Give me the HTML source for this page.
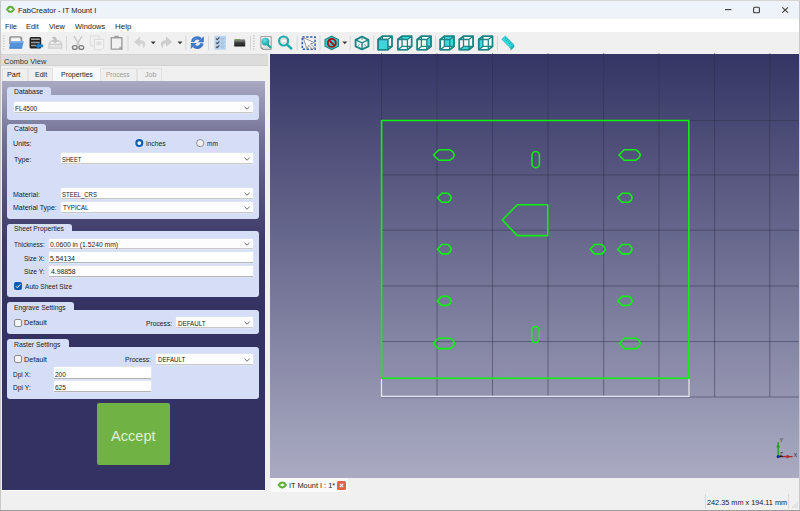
<!DOCTYPE html><html><head><meta charset="utf-8"><style>
*{box-sizing:border-box;margin:0;padding:0}
html,body{width:800px;height:511px;overflow:hidden;background:#f0f0f0;font-family:"Liberation Sans",sans-serif;color:#1a1a1a}
div,svg{position:absolute}
.t{white-space:nowrap}
.g{background:#d5def6;border-radius:3px}
.cb{background:#fdfdfd;border-bottom:1px solid #c8c8c8;border-radius:1px;box-shadow:0 0 0 0.5px #e4e8f4}
.fld{background:#fff;border-bottom:1px solid #b4b4b4;box-shadow:0 0 0 0.5px #e6eaf4}
.chk{width:8px;height:8px;border:1px solid #8a8a8a;border-radius:2px;background:#f5f5f5}
</style></head><body>
<div style="left:0;top:0;width:800px;height:1px;background:#d6d6d6"></div>
<div style="left:0;top:1px;width:800px;height:18px;background:#eef2f9;border-radius:6px 6px 0 0"></div>
<svg style="left:0;top:0" width="20" height="18" viewBox="0 0 20 18"><path d="M5.8 9.4L8.3 6.3Q10.5 5 12.7 6.3L15.2 9.4L12.7 12.2Q10.5 13.4 8.3 12.2Z M8.1 9.4L10.5 7.8L12.9 9.4L10.5 11Z" fill="#62b03a" fill-rule="evenodd"/></svg>
<div class="t" style="left:18.22px;top:5.92px;font-size:7.8px;line-height:9.36px;transform:scaleX(0.9620);transform-origin:0 0;color:#202020">FabCreator - IT Mount I</div>
<svg style="left:690px;top:2px" width="110" height="16" viewBox="0 0 110 16"><path d="M35 7.6H41.3" stroke="#3a3a3a" stroke-width="1.1"/><rect x="63.6" y="5.3" width="5.8" height="5.4" rx="1" fill="none" stroke="#3a3a3a" stroke-width="1.1"/><path d="M92.3 5.3L98 10.7M98 5.3L92.3 10.7" stroke="#3a3a3a" stroke-width="1.1"/></svg>
<div style="left:0;top:19px;width:800px;height:13px;background:#fff"></div>
<div class="t" style="left:5.32px;top:22.02px;font-size:7.8px;line-height:9.36px;transform:scaleX(0.9532);transform-origin:0 0">File</div>
<div class="t" style="left:26.13px;top:22.02px;font-size:7.8px;line-height:9.36px;transform:scaleX(0.9462);transform-origin:0 0">Edit</div>
<div class="t" style="left:49.00px;top:22.02px;font-size:7.8px;line-height:9.36px;transform:scaleX(0.9433);transform-origin:0 0">View</div>
<div class="t" style="left:74.90px;top:22.02px;font-size:7.8px;line-height:9.36px;transform:scaleX(0.9556);transform-origin:0 0">Windows</div>
<div class="t" style="left:114.99px;top:22.02px;font-size:7.8px;line-height:9.36px;transform:scaleX(1.0164);transform-origin:0 0">Help</div>
<svg style="left:0;top:32px" width="800" height="21" viewBox="0 32 800 21"><rect x="3.3" y="35.5" width="1" height="1" fill="#a8a8a8"/><rect x="3.3" y="38.1" width="1" height="1" fill="#a8a8a8"/><rect x="3.3" y="40.7" width="1" height="1" fill="#a8a8a8"/><rect x="3.3" y="43.3" width="1" height="1" fill="#a8a8a8"/><rect x="3.3" y="45.9" width="1" height="1" fill="#a8a8a8"/><rect x="3.3" y="48.5" width="1" height="1" fill="#a8a8a8"/><path d="M9.2 37.2L10.5 36.2H20.5L22.2 37.5V44H9.2Z" fill="#8e8e8e"/><path d="M10.8 37.6H20.4L20.9 43.5H10.5Z" fill="#dadada"/><path d="M11.5 38.3H19.8L20.2 42.5H11.2Z" fill="#f6f6f6"/><path d="M10.3 41.2H23.7L22 48.6H9.2Z" fill="#5593dc"/><path d="M10.3 41.2H23.7L23.4 42.4H10.1Z" fill="#86b6ec"/><path d="M9.4 47.7H22.2L22 48.6H9.2Z" fill="#3c72b8"/><rect x="29.6" y="37" width="11.6" height="11.5" rx="1.5" fill="#222"/><path d="M31 39.2H39.8M31 42.4H39.8M31 45.6H36" stroke="#9a9a9a" stroke-width="1.5"/><path d="M35.6 45.9L39.2 42.6V44.6H43.2V47.2H39.2V49.2Z" fill="#1a80d2"/><path d="M48.3 43.5L50.5 40.5H53V42H51.3L50 43.8H60.6L59.3 42H57.6V40.5H60.1L62.3 43.5V48.8H48.3Z" fill="#cdcdcd"/><path d="M49.6 45H61V47.6H49.6Z" fill="#e4e4e4"/><path d="M51.5 37.8C53.5 36 56 36.3 56.8 38.6V40.2H59L55.2 43.6L51.5 40.2H53.6V39.4C53.3 38.5 52.5 38.3 51.5 37.8Z" fill="#c2c2c2"/><path d="M66.5 35.8V50.2" stroke="#d6d6d6" stroke-width="1"/><path d="M74 36L79.5 45.5M82 36L76.5 45.5" stroke="#c4c4c4" stroke-width="1.3"/><ellipse cx="74.8" cy="47.5" rx="2.4" ry="1.9" fill="none" stroke="#7c7c7c" stroke-width="1.3"/><ellipse cx="81.3" cy="47.5" rx="2.4" ry="1.9" fill="none" stroke="#7c7c7c" stroke-width="1.3"/><rect x="90.6" y="35.8" width="8.4" height="10" fill="none" stroke="#dedede" stroke-width="1"/><path d="M94.5 39.3H103.7V47.5L101.5 49.7H94.5Z" fill="#f4f4f4" stroke="#d8d8d8" stroke-width="1"/><rect x="96.3" y="41.5" width="5.2" height="4" fill="#e0e0e0"/><rect x="110.6" y="37" width="12" height="12.8" fill="#9e9e9e"/><path d="M112 38.6H121.2V46.5L119 48.4H112Z" fill="#f1f1f1"/><rect x="114.3" y="35.7" width="4.6" height="2.2" rx="0.8" fill="#9e9e9e"/><path d="M119 48.4L121.2 46.5H119Z" fill="#c8c8c8"/><path d="M128.0 35.8V50.2" stroke="#d6d6d6" stroke-width="1"/><path d="M140.2 36.3L134 42L140.2 46.8V43.8C142.8 43.6 144 45.5 142.8 48.6C146.6 45.6 146.4 40.2 140.2 40.2Z" fill="#d2d2d2"/><path d="M150.7 41.6H155.7L153.2 44.3Z" fill="#3a3a3a"/><path d="M166 36.3L172.2 42L166 46.8V43.8C163.4 43.6 162.2 45.5 163.4 48.6C159.6 45.6 159.8 40.2 166 40.2Z" fill="#cdcdcd"/><path d="M177.5 41.6H182.5L180.0 44.3Z" fill="#3a3a3a"/><path d="M185.8 35.8V50.2" stroke="#d6d6d6" stroke-width="1"/><path d="M192.6 41.9A4.7 4.7 0 0 1 200.7 39.4" fill="none" stroke="#3d78c6" stroke-width="3.2"/><path d="M203.8 36.2V42.3H197.7Z" fill="#3d78c6"/><path d="M202 43.3A4.7 4.7 0 0 1 193.9 45.8" fill="none" stroke="#3d78c6" stroke-width="3.2"/><path d="M190.8 49V42.9H196.9Z" fill="#3d78c6"/><path d="M193.3 40.6A4 4 0 0 1 196.5 37.8" fill="none" stroke="#7aaae0" stroke-width="0.8" opacity="0.8"/><path d="M191.8 44.5V47.2" stroke="#7aaae0" stroke-width="0.8" opacity="0.7"/><path d="M208.5 35.8V50.2" stroke="#d6d6d6" stroke-width="1"/><rect x="214.4" y="35.8" width="11.6" height="14" fill="#b9d5f0"/><path d="M216 38.6L217.2 39.7L219.4 37.4" stroke="#4a5058" stroke-width="1.2" fill="none"/><path d="M220.6 38.3H224.8M220.6 39.9H223.8" stroke="#98b4d0" stroke-width="0.7"/><path d="M216 42.6L217.2 43.7L219.4 41.4" stroke="#4a5058" stroke-width="1.2" fill="none"/><path d="M220.6 42.3H224.8M220.6 43.9H223.8" stroke="#98b4d0" stroke-width="0.7"/><path d="M216 46.6L217.2 47.7L219.4 45.4" stroke="#4a5058" stroke-width="1.2" fill="none"/><path d="M220.6 46.3H224.8M220.6 47.9H223.8" stroke="#98b4d0" stroke-width="0.7"/><defs><linearGradient id="pg" x1="0" y1="0" x2="0" y2="1"><stop offset="0" stop-color="#9a9a9a"/><stop offset="0.45" stop-color="#4a4a4a"/><stop offset="1" stop-color="#151515"/></linearGradient></defs><path d="M234.2 39.2H244.8L245.2 40.5V46.6H234.2Z" fill="url(#pg)"/><path d="M235.2 39.3H240.5V40.2H235.2Z" fill="#5a9a3a"/><path d="M234.2 43.2H245.2" stroke="#2a2a2a" stroke-width="0.6"/><path d="M250.5 35.8V50.2" stroke="#d6d6d6" stroke-width="1"/><rect x="253.4" y="35.5" width="1" height="1" fill="#a8a8a8"/><rect x="253.4" y="38.1" width="1" height="1" fill="#a8a8a8"/><rect x="253.4" y="40.7" width="1" height="1" fill="#a8a8a8"/><rect x="253.4" y="43.3" width="1" height="1" fill="#a8a8a8"/><rect x="253.4" y="45.9" width="1" height="1" fill="#a8a8a8"/><rect x="253.4" y="48.5" width="1" height="1" fill="#a8a8a8"/><defs><linearGradient id="fpg" x1="0" y1="0" x2="0" y2="1"><stop offset="0" stop-color="#fafafa"/><stop offset="1" stop-color="#dcdcdc"/></linearGradient><radialGradient id="ball" cx="0.4" cy="0.35" r="0.7"><stop offset="0" stop-color="#5ee6e8"/><stop offset="1" stop-color="#179c9f"/></radialGradient></defs><path d="M260.9 36.6H271.2V49.4H262.6L260.9 47.7Z" fill="url(#fpg)" stroke="#8e8e8e" stroke-width="0.9"/><path d="M260.9 47.7L262.6 49.4V47.7Z" fill="#666"/><path d="M267.3 44.3L270.3 47.3" stroke="#1ea3a6" stroke-width="2.1" stroke-linecap="round"/><circle cx="265.5" cy="41.6" r="3.9" fill="url(#ball)"/><circle cx="283.6" cy="41" r="4.5" fill="#e4e4e4" stroke="#1faaae" stroke-width="2.2"/><rect x="281" y="39.2" width="5.2" height="3.6" fill="#f6f6f6" stroke="#c8c8c8" stroke-width="0.4"/><path d="M287.4 44.8L291.3 48.5" stroke="#1faaae" stroke-width="2.5" stroke-linecap="round"/><path d="M297.2 35.8V50.2" stroke="#d6d6d6" stroke-width="1"/><rect x="302.3" y="36.9" width="12.8" height="12.3" fill="none" stroke="#2f5fae" stroke-width="1.5" stroke-dasharray="2.4 1.5"/><path d="M0 0V11L2.8 8.6L4.9 13.2L6.9 12.3L4.8 7.8H8.6Z" fill="#f8f8f8" stroke="#707070" stroke-width="0.6" stroke-linejoin="round" transform="translate(303.2 37.6) rotate(-18) scale(1.05)"/><path d="M320.0 35.8V50.2" stroke="#d6d6d6" stroke-width="1"/><path d="M331.8 36.2L338.5 39.5V46.2L331.8 49.6L325 46.2V39.5Z" fill="#37cfd6" stroke="#1d8585" stroke-width="1.1"/><circle cx="331.8" cy="42.9" r="4" fill="none" stroke="#a81414" stroke-width="1.9"/><path d="M329 40.1L334.6 45.7" stroke="#a81414" stroke-width="1.9"/><path d="M342.3 41.6H347.3L344.8 44.3Z" fill="#3a3a3a"/><path d="M350.2 35.8V50.2" stroke="#d6d6d6" stroke-width="1"/><path d="M362 36.6L368.4 39.8V46.4L362 49.4L355.6 46.4V39.8Z" fill="#f8f8f8" stroke="#1d8585" stroke-width="1.9" stroke-linejoin="round"/><path d="M355.6 39.8L362 42.8L368.4 39.8M362 42.8V49.4" stroke="#1d8585" stroke-width="1.4" fill="none"/><path d="M362 36.4V40M358 45.5L359.8 44.5M366 45.5L364.2 44.5" stroke="#1d8585" stroke-width="0.8" fill="none"/><path d="M373.7 35.8V50.2" stroke="#d6d6d6" stroke-width="1"/><path d="M378.20 39.50 L382.40 36.20 L392.00 36.20 L392.00 46.40 L387.80 49.70 L378.20 49.70Z" fill="#fbfbfb"/><path d="M378.20 39.50 L387.80 39.50 L387.80 49.70 L378.20 49.70ZM382.40 36.20 L392.00 36.20 L392.00 46.40 L382.40 46.40ZM378.20 39.50L382.40 36.20M387.80 39.50L392.00 36.20M387.80 49.70L392.00 46.40M378.20 49.70L382.40 46.40" stroke="#1d8585" stroke-width="1.3" fill="none"/><path d="M378.20 39.50 L387.80 39.50 L387.80 49.70 L378.20 49.70Z" fill="#3cd6dc" stroke="#1d8585" stroke-width="1.3" stroke-linejoin="round"/><path d="M378.20 39.50 L382.40 36.20 L392.00 36.20 L392.00 46.40 L387.80 49.70 L378.20 49.70Z" stroke="#1d8585" stroke-width="1.6" fill="none" stroke-linejoin="round"/><path d="M397.80 39.50 L402.00 36.20 L411.60 36.20 L411.60 46.40 L407.40 49.70 L397.80 49.70Z" fill="#fbfbfb"/><path d="M397.80 39.50 L402.00 36.20 L411.60 36.20 L407.40 39.50Z" fill="#3cd6dc"/><path d="M397.80 39.50 L407.40 39.50 L407.40 49.70 L397.80 49.70ZM402.00 36.20 L411.60 36.20 L411.60 46.40 L402.00 46.40ZM397.80 39.50L402.00 36.20M407.40 39.50L411.60 36.20M407.40 49.70L411.60 46.40M397.80 49.70L402.00 46.40" stroke="#1d8585" stroke-width="1.3" fill="none"/><path d="M397.80 39.50 L402.00 36.20 L411.60 36.20 L411.60 46.40 L407.40 49.70 L397.80 49.70Z" stroke="#1d8585" stroke-width="1.6" fill="none" stroke-linejoin="round"/><path d="M417.20 39.50 L421.40 36.20 L431.00 36.20 L431.00 46.40 L426.80 49.70 L417.20 49.70Z" fill="#fbfbfb"/><path d="M426.80 39.50 L431.00 36.20 L431.00 46.40 L426.80 49.70Z" fill="#3cd6dc"/><path d="M417.20 39.50 L426.80 39.50 L426.80 49.70 L417.20 49.70ZM421.40 36.20 L431.00 36.20 L431.00 46.40 L421.40 46.40ZM417.20 39.50L421.40 36.20M426.80 39.50L431.00 36.20M426.80 49.70L431.00 46.40M417.20 49.70L421.40 46.40" stroke="#1d8585" stroke-width="1.3" fill="none"/><path d="M417.20 39.50 L421.40 36.20 L431.00 36.20 L431.00 46.40 L426.80 49.70 L417.20 49.70Z" stroke="#1d8585" stroke-width="1.6" fill="none" stroke-linejoin="round"/><path d="M435.6 35.8V50.2" stroke="#d6d6d6" stroke-width="1"/><path d="M440.20 39.50 L444.40 36.20 L454.00 36.20 L454.00 46.40 L449.80 49.70 L440.20 49.70Z" fill="#fbfbfb"/><path d="M444.40 36.20 L454.00 36.20 L454.00 46.40 L444.40 46.40Z" fill="#3cd6dc"/><path d="M440.20 39.50 L449.80 39.50 L449.80 49.70 L440.20 49.70ZM444.40 36.20 L454.00 36.20 L454.00 46.40 L444.40 46.40ZM440.20 39.50L444.40 36.20M449.80 39.50L454.00 36.20M449.80 49.70L454.00 46.40M440.20 49.70L444.40 46.40" stroke="#1d8585" stroke-width="1.3" fill="none"/><path d="M440.20 39.50 L444.40 36.20 L454.00 36.20 L454.00 46.40 L449.80 49.70 L440.20 49.70Z" stroke="#1d8585" stroke-width="1.6" fill="none" stroke-linejoin="round"/><path d="M459.30 39.50 L463.50 36.20 L473.10 36.20 L473.10 46.40 L468.90 49.70 L459.30 49.70Z" fill="#fbfbfb"/><path d="M459.30 49.70 L463.50 46.40 L473.10 46.40 L468.90 49.70Z" fill="#3cd6dc"/><path d="M459.30 39.50 L468.90 39.50 L468.90 49.70 L459.30 49.70ZM463.50 36.20 L473.10 36.20 L473.10 46.40 L463.50 46.40ZM459.30 39.50L463.50 36.20M468.90 39.50L473.10 36.20M468.90 49.70L473.10 46.40M459.30 49.70L463.50 46.40" stroke="#1d8585" stroke-width="1.3" fill="none"/><path d="M459.30 39.50 L463.50 36.20 L473.10 36.20 L473.10 46.40 L468.90 49.70 L459.30 49.70Z" stroke="#1d8585" stroke-width="1.6" fill="none" stroke-linejoin="round"/><path d="M478.70 39.50 L482.90 36.20 L492.50 36.20 L492.50 46.40 L488.30 49.70 L478.70 49.70Z" fill="#fbfbfb"/><path d="M478.70 39.50 L482.90 36.20 L482.90 46.40 L478.70 49.70Z" fill="#3cd6dc"/><path d="M478.70 39.50 L488.30 39.50 L488.30 49.70 L478.70 49.70ZM482.90 36.20 L492.50 36.20 L492.50 46.40 L482.90 46.40ZM478.70 39.50L482.90 36.20M488.30 39.50L492.50 36.20M488.30 49.70L492.50 46.40M478.70 49.70L482.90 46.40" stroke="#1d8585" stroke-width="1.3" fill="none"/><path d="M478.70 39.50 L482.90 36.20 L492.50 36.20 L492.50 46.40 L488.30 49.70 L478.70 49.70Z" stroke="#1d8585" stroke-width="1.6" fill="none" stroke-linejoin="round"/><path d="M497.4 35.8V50.2" stroke="#d6d6d6" stroke-width="1"/><path d="M501.8 39.3L505.3 35.9L513.9 44.7L510.3 48.1Z" fill="#2ed8de" stroke="#1a9ea2" stroke-width="0.5"/><path d="M510.3 48.1L513.9 44.7C514.3 45.5 514.2 47 513.2 48L510.6 50.3C511 49.5 511 48.6 510.3 48.1Z" fill="#1fb0b6" stroke="#1a9ea2" stroke-width="0.4"/><path d="M506.3 37.8L505.2 38.9M507.8 39.3L506.2 40.9M509.3 40.8L508.2 41.9M510.8 42.3L509.2 43.9M512.3 43.8L511.2 44.9" stroke="#157a7e" stroke-width="0.7"/></svg>
<div style="left:270px;top:53.6px;width:530px;height:424.4px;background:linear-gradient(#353565,#aaabc2)"></div>
<svg class="abs" style="left:270px;top:53px" width="530" height="425" viewBox="270 53 530 425"><path d="M381.5 53V397 M437 53V397 M492.5 53V397 M548 53V397 M603.7 53V397 M659 53V397 M714.6 53V397 M769.8 53V397 M381 120.5H800 M381 175H800 M381 230.2H800 M381 286H800 M381 341.6H800 M381 397H800" stroke="#2e2d4a" stroke-opacity="0.48" stroke-width="1" fill="none"/><path d="M381.5 378.5V396.3H689V378.5" stroke="#e8e8f0" stroke-width="1.2" fill="none"/><path d="M381.6 120.5H688.8V378.2H381.6Z M433.60 155.00L438.80 149.80H450.00L453.10 152.20L454.40 155.00L453.10 157.80L450.00 160.20H438.80Z M619.00 155.00L624.20 149.80H635.90L639.00 152.20L640.30 155.00L639.00 157.80L635.90 160.20H624.20Z M532.00 155.20A3.70 3.70 0 0 1 539.40 155.20V163.90A3.70 3.70 0 0 1 532.00 163.90Z M437.40 197.80L441.80 193.30H448.00L450.40 195.60L451.30 197.80L450.40 200.00L448.00 202.30H441.80Z M617.70 197.80L622.10 193.30H628.90L631.30 195.60L632.20 197.80L631.30 200.00L628.90 202.30H622.10Z M502.3 220L517.3 204.8H547.8V235.6H517.3Z M437.40 249.20L441.80 244.50H448.00L450.40 247.00L451.30 249.20L450.40 251.40L448.00 253.90H441.80Z M590.10 249.20L594.50 244.50H601.90L604.30 247.00L605.20 249.20L604.30 251.40L601.90 253.90H594.50Z M617.70 249.20L622.10 244.50H628.90L631.30 247.00L632.20 249.20L631.30 251.40L628.90 253.90H622.10Z M437.20 300.90L441.60 296.40H448.00L450.40 298.70L451.30 300.90L450.40 303.10L448.00 305.40H441.60Z M617.70 300.90L622.10 296.40H628.90L631.30 298.70L632.20 300.90L631.30 303.10L628.90 305.40H622.10Z M531.80 330.20A3.70 3.70 0 0 1 539.20 330.20V338.70A3.70 3.70 0 0 1 531.80 338.70Z M433.30 343.40L438.50 338.20H450.10L453.20 340.60L454.50 343.40L453.20 346.20L450.10 348.60H438.50Z M619.40 343.40L624.60 338.20H635.90L639.00 340.60L640.30 343.40L639.00 346.20L635.90 348.60H624.60Z" stroke="#10f010" stroke-width="1.6" fill="none" stroke-linejoin="round"/><path d="M778.2 456.6V442" stroke="#2a9a2a" stroke-width="1.4"/><path d="M776.2 447.5L778.2 443.5L780.2 447.5Z" fill="#2a9a2a"/>
<path d="M778.2 456.6H792.6" stroke="#b02a2a" stroke-width="1.3"/><path d="M786.5 454.7L791 456.6L786.5 458.5Z" fill="#b02a2a"/>
<path d="M779 456.6H783" stroke="#222" stroke-width="1"/>
<circle cx="778.2" cy="456.6" r="1.6" fill="#1a2aa0"/>
<text x="779.6" y="442.3" font-size="5.6" fill="#333" font-family="Liberation Sans">Y</text>
<text x="793.6" y="456.8" font-size="5.6" fill="#333" font-family="Liberation Sans">X</text>
<text x="779.6" y="456.4" font-size="5.6" fill="#333" font-family="Liberation Sans">Z</text></svg>
<div style="left:1px;top:53.6px;width:266.5px;height:12.2px;background:#dcdcdc;border-top:1px solid #d2d2d2;border-bottom:1px solid #d2d2d2"></div>
<div class="t" style="left:3.76px;top:56.62px;font-size:7.8px;line-height:9.36px;transform:scaleX(0.9600);transform-origin:0 0;color:#333">Combo View</div>
<div style="left:2px;top:67.5px;width:25.6px;height:13.5px;background:#efefef;border:1px solid #e2e2e2;border-bottom:none"></div>
<div class="t" style="left:6.93px;top:70.12px;font-size:7.8px;line-height:9.36px;transform:scaleX(0.9309);transform-origin:0 0">Part</div>
<div style="left:27.6px;top:67.5px;width:25.4px;height:13.5px;background:#efefef;border:1px solid #e2e2e2;border-bottom:none"></div>
<div class="t" style="left:34.65px;top:70.12px;font-size:7.8px;line-height:9.36px;transform:scaleX(0.9000);transform-origin:0 0">Edit</div>
<div style="left:53px;top:67.5px;width:47.4px;height:13.5px;background:#f9f9f9;border:1px solid #f9f9f9;border-bottom:none"></div>
<div class="t" style="left:60.55px;top:70.12px;font-size:7.8px;line-height:9.36px;transform:scaleX(0.8950);transform-origin:0 0">Properties</div>
<div style="left:100.4px;top:67.5px;width:36.6px;height:13.5px;background:#efefef;border:1px solid #e2e2e2;border-bottom:none"></div>
<div class="t" style="left:106.38px;top:70.12px;font-size:7.8px;line-height:9.36px;transform:scaleX(0.8364);transform-origin:0 0;color:#9c9c9c">Process</div>
<div style="left:137px;top:67.5px;width:24.5px;height:13.5px;background:#efefef;border:1px solid #e2e2e2;border-bottom:none"></div>
<div class="t" style="left:145.30px;top:70.12px;font-size:7.8px;line-height:9.36px;transform:scaleX(0.9061);transform-origin:0 0;color:#9c9c9c">Job</div>
<div style="left:2px;top:81px;width:263px;height:409px;background:linear-gradient(#a9a9c3 0px,#6f6e93 60px,#3d3a68 160px,#343262 230px,#333263 409px)"></div>
<div class="g" style="left:7px;top:86.8px;width:44.0px;height:12.4px;border-radius:3px 3px 0 0"></div>
<div class="g" style="left:7px;top:95.2px;width:252px;height:24.4px"></div>
<div class="t" style="left:14.16px;top:87.12px;font-size:7.8px;line-height:9.36px;transform:scaleX(0.8702);transform-origin:0 0">Database</div>
<div class="cb" style="left:14px;top:101.7px;width:238.6px;height:11.8px"></div>
<div class="t" style="left:15.48px;top:103.72px;font-size:7.8px;line-height:9.36px;transform:scaleX(0.8388);transform-origin:0 0">FL4500</div>
<svg style="left:244.3px;top:105.9px" width="6" height="4" viewBox="0 0 6 4"><path d="M0.5 0.8L3 3.2L5.5 0.8" stroke="#666" stroke-width="0.95" fill="none"/></svg>
<div class="g" style="left:7px;top:123.5px;width:39.0px;height:11.5px;border-radius:3px 3px 0 0"></div>
<div class="g" style="left:7px;top:131px;width:252px;height:87.5px"></div>
<div class="t" style="left:14.38px;top:124.12px;font-size:7.8px;line-height:9.36px;transform:scaleX(0.8724);transform-origin:0 0">Catalog</div>
<div class="t" style="left:12.63px;top:139.02px;font-size:7.8px;line-height:9.36px;transform:scaleX(0.9333);transform-origin:0 0">Units:</div>
<svg style="left:130px;top:135px" width="80" height="16" viewBox="130 135 80 16"><circle cx="139.3" cy="143.1" r="4" fill="#0b5cb0"/><circle cx="139.3" cy="143.1" r="1.9" fill="#fff"/><circle cx="200.2" cy="143.1" r="3.6" fill="#f0f0f0" stroke="#7a7a7a" stroke-width="0.8"/></svg>
<div class="t" style="left:146.17px;top:139.02px;font-size:7.8px;line-height:9.36px;transform:scaleX(0.8690);transform-origin:0 0">inches</div>
<div class="t" style="left:207.08px;top:139.02px;font-size:7.8px;line-height:9.36px;transform:scaleX(0.8333);transform-origin:0 0">mm</div>
<div class="t" style="left:13.75px;top:154.72px;font-size:7.8px;line-height:9.36px;transform:scaleX(0.9108);transform-origin:0 0">Type:</div>
<div class="cb" style="left:60.6px;top:152.8px;width:192.0px;height:11.2px"></div>
<div class="t" style="left:62.31px;top:154.82px;font-size:7.8px;line-height:9.36px;transform:scaleX(0.7456);transform-origin:0 0">SHEET</div>
<svg style="left:244.3px;top:156.7px" width="6" height="4" viewBox="0 0 6 4"><path d="M0.5 0.8L3 3.2L5.5 0.8" stroke="#666" stroke-width="0.95" fill="none"/></svg>
<div class="t" style="left:12.80px;top:189.72px;font-size:7.8px;line-height:9.36px;transform:scaleX(0.8991);transform-origin:0 0">Material:</div>
<div class="cb" style="left:60.6px;top:187.9px;width:192.0px;height:11.1px"></div>
<div class="t" style="left:62.31px;top:189.92px;font-size:7.8px;line-height:9.36px;transform:scaleX(0.7667);transform-origin:0 0">STEEL_CRS</div>
<svg style="left:244.3px;top:191.8px" width="6" height="4" viewBox="0 0 6 4"><path d="M0.5 0.8L3 3.2L5.5 0.8" stroke="#666" stroke-width="0.95" fill="none"/></svg>
<div class="t" style="left:12.80px;top:203.32px;font-size:7.8px;line-height:9.36px;transform:scaleX(0.8953);transform-origin:0 0">Material Type:</div>
<div class="cb" style="left:60.6px;top:201.5px;width:192.0px;height:11.5px"></div>
<div class="t" style="left:62.50px;top:203.12px;font-size:7.8px;line-height:9.36px;transform:scaleX(0.7845);transform-origin:0 0">TYPICAL</div>
<svg style="left:244.3px;top:205.6px" width="6" height="4" viewBox="0 0 6 4"><path d="M0.5 0.8L3 3.2L5.5 0.8" stroke="#666" stroke-width="0.95" fill="none"/></svg>
<div class="g" style="left:7px;top:223.5px;width:65.0px;height:11.3px;border-radius:3px 3px 0 0"></div>
<div class="g" style="left:7px;top:230.8px;width:252px;height:66.6px"></div>
<div class="t" style="left:14.39px;top:224.32px;font-size:7.8px;line-height:9.36px;transform:scaleX(0.8589);transform-origin:0 0">Sheet Properties</div>
<div class="t" style="left:14.00px;top:240.12px;font-size:7.8px;line-height:9.36px;transform:scaleX(0.8245);transform-origin:0 0">Thickness:</div>
<div class="cb" style="left:48.8px;top:238.8px;width:203.8px;height:10.5px"></div>
<div class="t" style="left:50.48px;top:240.12px;font-size:7.8px;line-height:9.36px;transform:scaleX(0.8682);transform-origin:0 0">0.0600 in (1.5240 mm)</div>
<svg style="left:244.3px;top:242.4px" width="6" height="4" viewBox="0 0 6 4"><path d="M0.5 0.8L3 3.2L5.5 0.8" stroke="#666" stroke-width="0.95" fill="none"/></svg>
<div class="t" style="left:24.29px;top:253.92px;font-size:7.8px;line-height:9.36px;transform:scaleX(0.8337);transform-origin:0 0">Size X:</div>
<div class="fld" style="left:48.8px;top:252.3px;width:203.8px;height:10.6px"></div>
<div class="t" style="left:50.48px;top:253.92px;font-size:7.8px;line-height:9.36px;transform:scaleX(0.8829);transform-origin:0 0">5.54134</div>
<div class="t" style="left:24.29px;top:267.42px;font-size:7.8px;line-height:9.36px;transform:scaleX(0.8516);transform-origin:0 0">Size Y:</div>
<div class="fld" style="left:48.8px;top:266px;width:203.8px;height:11.0px"></div>
<div class="t" style="left:50.70px;top:267.42px;font-size:7.8px;line-height:9.36px;transform:scaleX(0.8750);transform-origin:0 0">4.98858</div>
<div style="left:13.7px;top:282.3px;width:8.2px;height:8.2px;border-radius:2px;background:#0b5cb0"></div>
<svg style="left:13.7px;top:282.3px" width="8" height="8"><path d="M1.8 4.2L3.3 5.7L6.3 2.4" stroke="#fff" stroke-width="1" fill="none"/></svg>
<div class="t" style="left:24.80px;top:282.42px;font-size:7.8px;line-height:9.36px;transform:scaleX(0.8413);transform-origin:0 0">Auto Sheet Size</div>
<div class="g" style="left:7px;top:302.2px;width:66.5px;height:11.6px;border-radius:3px 3px 0 0"></div>
<div class="g" style="left:7px;top:309.8px;width:252px;height:24.7px"></div>
<div class="t" style="left:14.16px;top:302.52px;font-size:7.8px;line-height:9.36px;transform:scaleX(0.8706);transform-origin:0 0">Engrave Settings</div>
<div class="chk" style="left:13.6px;top:318.5px"></div>
<div class="t" style="left:23.94px;top:318.12px;font-size:7.8px;line-height:9.36px;transform:scaleX(0.9237);transform-origin:0 0">Default</div>
<div class="t" style="left:145.57px;top:318.72px;font-size:7.8px;line-height:9.36px;transform:scaleX(0.8632);transform-origin:0 0">Process:</div>
<div class="cb" style="left:176.2px;top:317px;width:76.4px;height:11.0px"></div>
<div class="t" style="left:177.70px;top:318.72px;font-size:7.8px;line-height:9.36px;transform:scaleX(0.7985);transform-origin:0 0">DEFAULT</div>
<svg style="left:244.3px;top:320.8px" width="6" height="4" viewBox="0 0 6 4"><path d="M0.5 0.8L3 3.2L5.5 0.8" stroke="#666" stroke-width="0.95" fill="none"/></svg>
<div class="g" style="left:7px;top:339.1px;width:61.8px;height:11.4px;border-radius:3px 3px 0 0"></div>
<div class="g" style="left:7px;top:346.5px;width:252px;height:52.2px"></div>
<div class="t" style="left:14.16px;top:339.52px;font-size:7.8px;line-height:9.36px;transform:scaleX(0.8724);transform-origin:0 0">Raster Settings</div>
<div class="chk" style="left:13.6px;top:355.3px"></div>
<div class="t" style="left:23.94px;top:355.12px;font-size:7.8px;line-height:9.36px;transform:scaleX(0.9237);transform-origin:0 0">Default</div>
<div class="t" style="left:125.17px;top:355.37px;font-size:7.8px;line-height:9.36px;transform:scaleX(0.8547);transform-origin:0 0">Process:</div>
<div class="cb" style="left:156px;top:354.2px;width:96.6px;height:10.8px"></div>
<div class="t" style="left:157.51px;top:355.37px;font-size:7.8px;line-height:9.36px;transform:scaleX(0.7897);transform-origin:0 0">DEFAULT</div>
<svg style="left:244.3px;top:357.9px" width="6" height="4" viewBox="0 0 6 4"><path d="M0.5 0.8L3 3.2L5.5 0.8" stroke="#666" stroke-width="0.95" fill="none"/></svg>
<div class="t" style="left:13.08px;top:369.52px;font-size:7.8px;line-height:9.36px;transform:scaleX(0.8375);transform-origin:0 0">Dpi X:</div>
<div class="fld" style="left:53.8px;top:367.3px;width:97.0px;height:11.5px"></div>
<div class="t" style="left:55.49px;top:369.52px;font-size:7.8px;line-height:9.36px;transform:scaleX(0.8320);transform-origin:0 0">200</div>
<div class="t" style="left:13.07px;top:383.22px;font-size:7.8px;line-height:9.36px;transform:scaleX(0.8590);transform-origin:0 0">Dpi Y:</div>
<div class="fld" style="left:53.8px;top:381.2px;width:97.0px;height:11.3px"></div>
<div class="t" style="left:55.49px;top:383.22px;font-size:7.8px;line-height:9.36px;transform:scaleX(0.8320);transform-origin:0 0">625</div>
<div style="left:96.6px;top:403.4px;width:73.9px;height:61.3px;background:#71b244;border-radius:2px"></div>
<div class="t" style="left:110.50px;top:427.10px;font-size:15px;line-height:18.00px;transform:scaleX(0.9727);transform-origin:0 0;color:rgba(242,250,236,0.88)">Accept</div>
<div style="left:270.6px;top:478px;width:77.4px;height:14px;background:#f9f9f9"></div>
<svg style="left:270px;top:475px" width="20" height="18" viewBox="0 0 20 18"><path d="M7.4 10L9.9 7Q12.3 5.8 14.7 7L17.2 10L14.7 12.8Q12.3 14 9.9 12.8Z M9.8 10L12.3 8.5L14.8 10L12.3 11.5Z" fill="#62b03a" fill-rule="evenodd"/></svg>
<div class="t" style="left:288.90px;top:482.30px;font-size:7.4px;line-height:8.88px;transform:scaleX(0.9967);transform-origin:0 0">IT Mount I : 1*</div>
<div style="left:337px;top:481px;width:9px;height:8.8px;background:#e06446;border-radius:1.5px"></div>
<svg style="left:337px;top:481px" width="9" height="9"><path d="M2.8 2.8L6.2 6.2M6.2 2.8L2.8 6.2" stroke="#fff" stroke-width="1.1"/></svg>
<div style="left:704.5px;top:494px;width:1px;height:15px;background:#d8d8d8"></div>
<div style="left:787.5px;top:494px;width:1px;height:15px;background:#d8d8d8"></div>
<div class="t" style="left:707.36px;top:497.81px;font-size:7.6px;line-height:9.12px;transform:scaleX(0.9595);transform-origin:0 0">242.35 mm x 194.11 mm</div>
<svg style="left:789px;top:500px" width="10" height="10"><path d="M7.5 2.5h1v1h-1zM5.5 4.5h1v1h-1zM7.5 4.5h1v1h-1zM3.5 6.5h1v1h-1zM5.5 6.5h1v1h-1zM7.5 6.5h1v1h-1z" fill="#b8b8b8"/></svg>
<div style="left:2px;top:490px;width:263px;height:1px;background:#fafafa"></div>
<div style="left:0;top:1px;width:1px;height:510px;background:#c8c8c8"></div>
<div style="left:799px;top:1px;width:1px;height:510px;background:#c8c8c8"></div>
<div style="left:0;top:510px;width:800px;height:1px;background:#9c9c9c"></div>
</body></html>
